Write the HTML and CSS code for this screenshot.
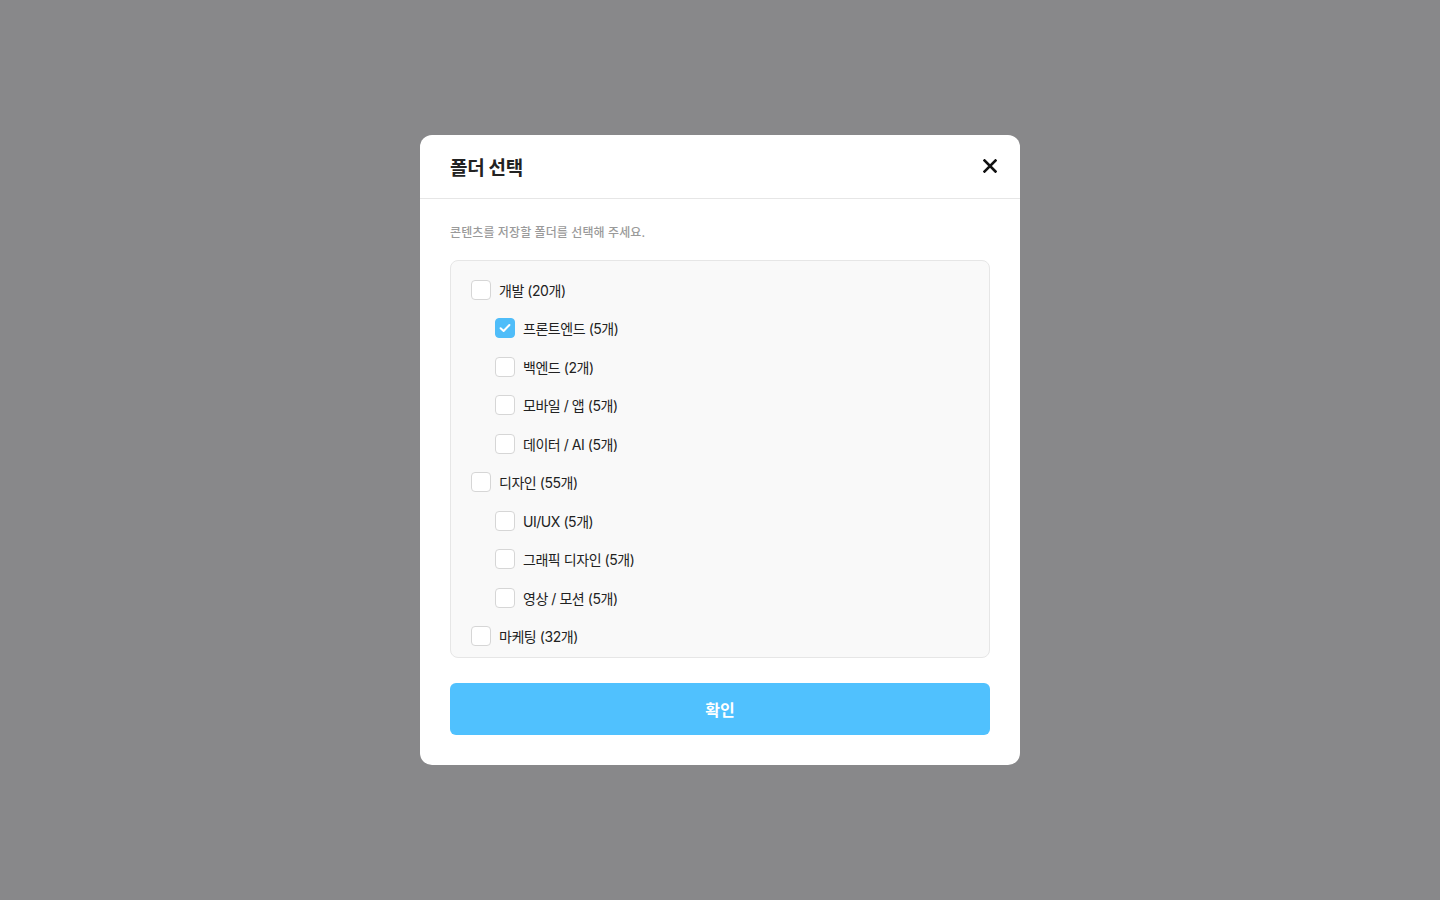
FILE: index.html
```html
<!DOCTYPE html>
<html lang="ko">
<head>
    <meta charset="UTF-8">
    <meta name="viewport" content="width=device-width, initial-scale=1.0">
    <title>폴더 선택</title>
    <link rel="stylesheet" href="styles.css">
</head>
<body>
    <div class="overlay">
        <div class="modal">
            <div class="modal-header">
                <h2 class="modal-title">폴더 선택</h2>
                <button class="close-btn" aria-label="닫기">
                    <svg width="14" height="14" viewBox="0 0 14 14">
                        <path d="M1.5 1.5L12.5 12.5M12.5 1.5L1.5 12.5" stroke="#111" stroke-width="2.6" stroke-linecap="square"/>
                    </svg>
                </button>
            </div>
            <div class="modal-body">
                <p class="desc">콘텐츠를 저장할 폴더를 선택해 주세요.</p>

                <ul class="folder-list">
                    <li class="folder"><span class="check"></span>개발 (20개)</li>
                    <li class="folder sub"><span class="check checked"><svg width="12" height="12" viewBox="0 0 12 12"><path d="M1.6 6.2L4.6 9L10.4 3" fill="none" stroke="#fff" stroke-width="2" stroke-linecap="round" stroke-linejoin="round"/></svg></span>프론트엔드 (5개)</li>
                    <li class="folder sub"><span class="check"></span>백엔드 (2개)</li>
                    <li class="folder sub"><span class="check"></span>모바일 / 앱 (5개)</li>
                    <li class="folder sub"><span class="check"></span>데이터 / AI (5개)</li>
                    <li class="folder"><span class="check"></span>디자인 (55개)</li>
                    <li class="folder sub"><span class="check"></span>UI/UX (5개)</li>
                    <li class="folder sub"><span class="check"></span>그래픽 디자인 (5개)</li>
                    <li class="folder sub"><span class="check"></span>영상 / 모션 (5개)</li>
                    <li class="folder"><span class="check"></span>마케팅 (32개)</li>
                </ul>

                <button class="confirm-btn">확인</button>
            </div>
        </div>
    </div>
</body>
</html>
```

FILE: styles.css
```css
* {
    box-sizing: border-box;
}
body {
    margin: 0;
    font-family: Inter, "Noto Sans CJK KR", sans-serif;
    background-color: #88888a;
}
.overlay {
    min-height: 100vh;
    display: flex;
    justify-content: center;
    align-items: center;
}
.modal {
    width: 600px;
    background-color: #fff;
    border-radius: 12px;
}
.modal-header {
    height: 64px;
    padding: 0 23px 1px 30px;
    display: flex;
    justify-content: space-between;
    align-items: center;
    border-bottom: 1px solid #e6e6e6;
}
.modal-title {
    margin: 0;
    font-size: 19px;
    font-weight: 700;
    letter-spacing: -0.3px;
    color: #222;
}
.close-btn {
    border: none;
    background: none;
    padding: 0;
    width: 14px;
    height: 14px;
    cursor: pointer;
    display: flex;
}
.modal-body {
    padding: 25px 30px 30px;
}
.desc {
    margin: 0 0 18px;
    font-size: 12px;
    font-weight: 500;
    line-height: 18px;
    letter-spacing: 0.1px;
    color: #9a9a9a;
}
.folder-list {
    list-style: none;
    margin: 0;
    padding: 19px 20px 11px;
    background-color: #f9f9f9;
    border: 1px solid #e6e6e6;
    border-radius: 8px;
}
.folder {
    display: flex;
    align-items: center;
    gap: 8px;
    height: 20px;
    margin-bottom: 18.45px;
    font-size: 14px;
    letter-spacing: -0.45px;
    color: #222;
}
.folder:last-child {
    margin-bottom: 0;
}
.folder.sub {
    padding-left: 24px;
}
.check {
    width: 20px;
    height: 20px;
    flex-shrink: 0;
    background-color: #fff;
    border: 1px solid #d6d6d6;
    border-radius: 4px;
    display: flex;
    justify-content: center;
    align-items: center;
}
.check.checked {
    background-color: #4fbdf9;
    border-color: #4fbdf9;
}
.confirm-btn {
    display: block;
    width: 100%;
    height: 52px;
    margin-top: 25px;
    border: none;
    border-radius: 6px;
    background-color: #50c1fe;
    color: #fff;
    font-family: inherit;
    font-size: 16px;
    font-weight: 700;
    cursor: pointer;
}
```
